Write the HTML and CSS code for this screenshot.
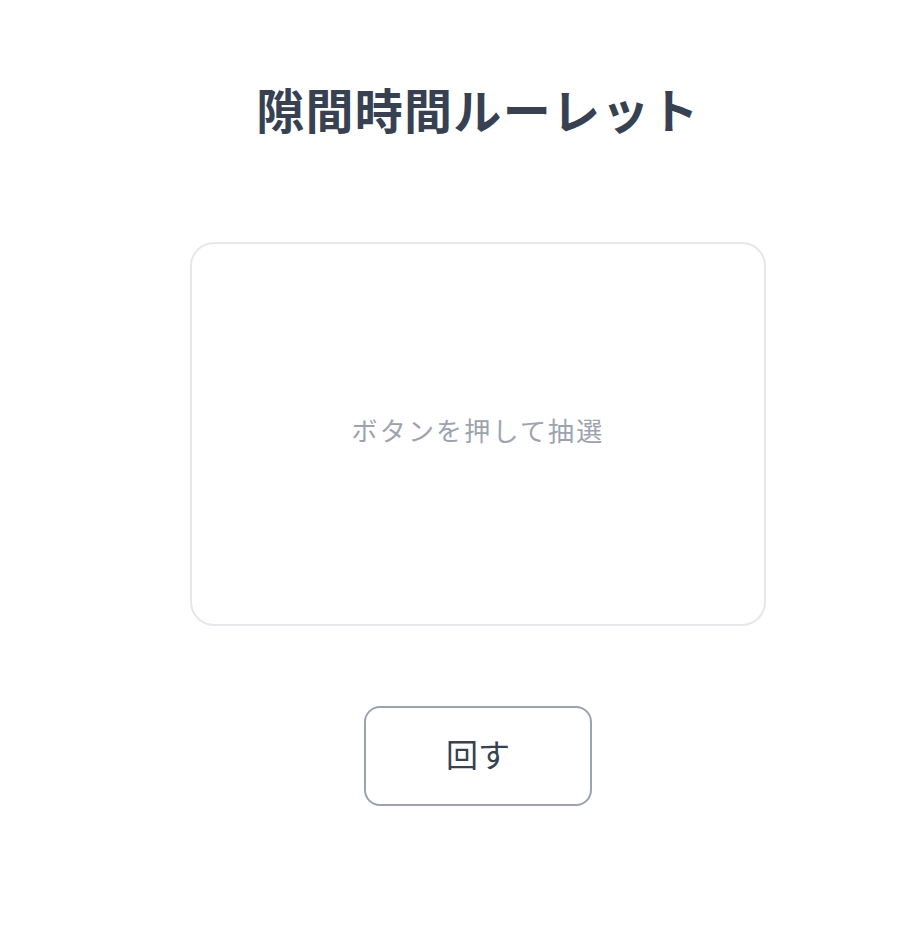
FILE: index.html
```html
<!DOCTYPE html>
<html lang="ja">
<head>
<meta charset="utf-8">
<link rel="stylesheet" href="styles.css">
</head>
<body>
<main class="page">
  <h1 class="title">隙間時間ルーレット</h1>
  <div class="card">
    <p class="placeholder">ボタンを押して抽選</p>
  </div>
  <button class="spin">回す</button>
</main>
</body>
</html>
```
FILE: styles.css
```css
html, body {
  margin: 0;
  padding: 0;
  background: #ffffff;
}
body {
  font-family: "Noto Sans CJK JP", "Noto Sans", sans-serif;
  color: #374151;
}
.page {
  display: flex;
  flex-direction: column;
  align-items: center;
  padding-top: 76px;
  padding-left: 50px;
}
.title {
  margin: 0;
  font-size: 48px;
  font-weight: 700;
  line-height: 64px;
  letter-spacing: 1.3px;
  color: #374151;
}
.card {
  margin-top: 102px;
  width: 576px;
  height: 384px;
  box-sizing: border-box;
  border: 2px solid #e5e7eb;
  border-radius: 24px;
  display: flex;
  align-items: center;
  justify-content: center;
  padding-bottom: 10px;
}
.placeholder {
  margin: 0;
  font-size: 26px;
  color: #9ca3af;
  letter-spacing: 2.2px;
}
.spin {
  margin-top: 80px;
  width: 228px;
  height: 100px;
  box-sizing: border-box;
  border: 2px solid #9ca3af;
  border-radius: 16px;
  background: #ffffff;
  font-family: "Noto Sans CJK JP", sans-serif;
  font-size: 32px;
  color: #374151;
  letter-spacing: 0;
  padding: 0 0 6px 0;
}
```
